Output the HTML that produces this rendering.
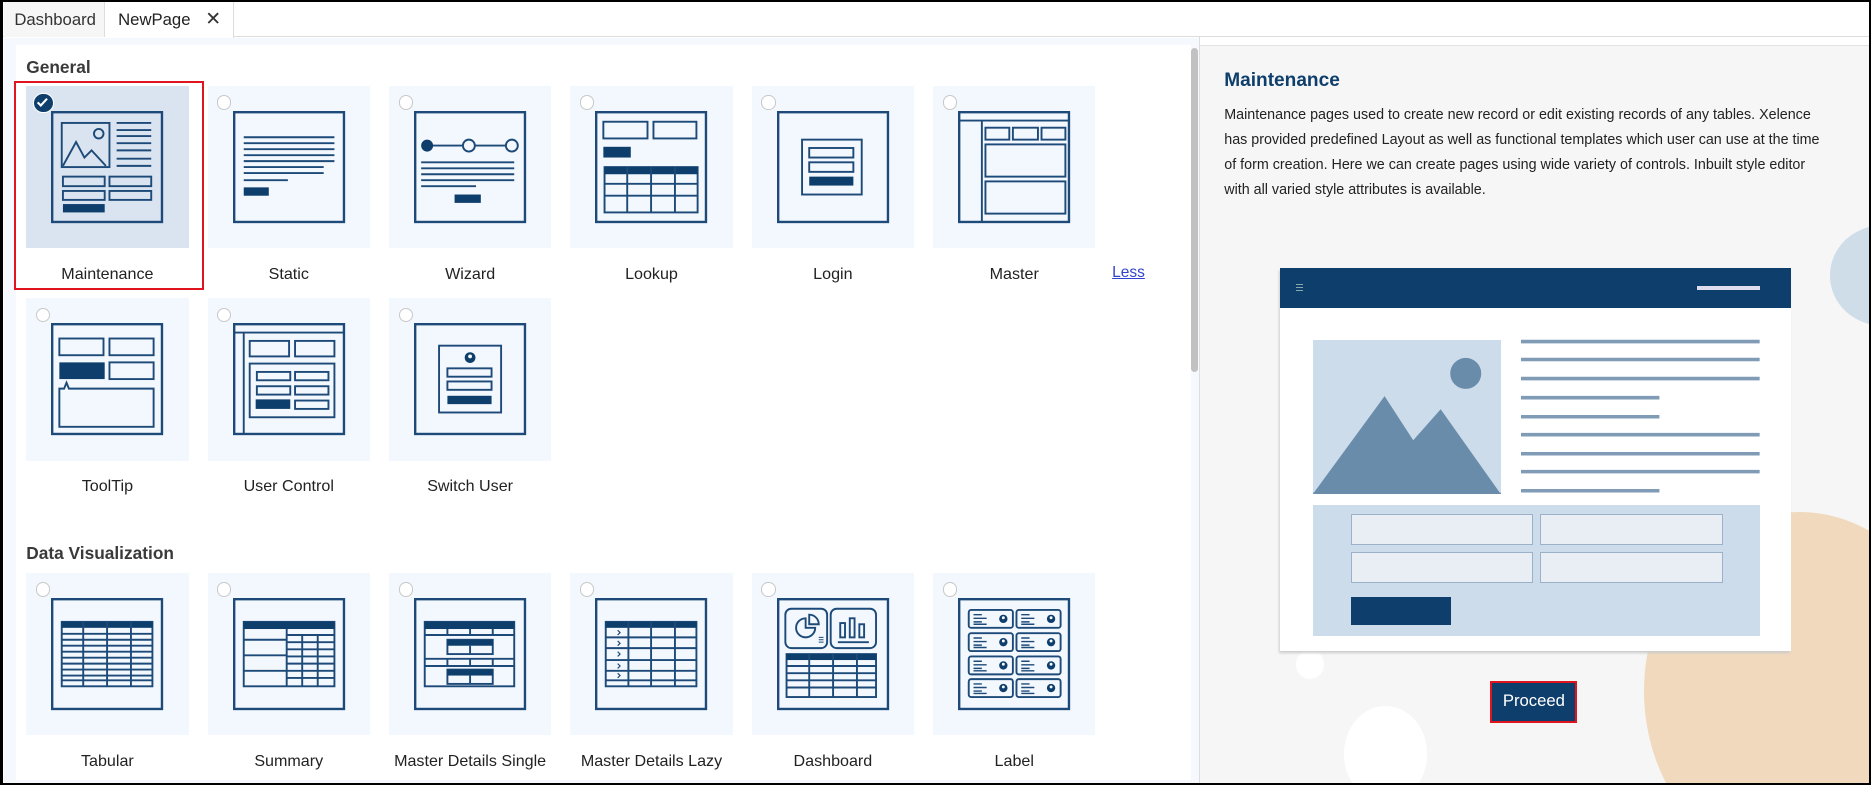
<!DOCTYPE html>
<html><head><meta charset="utf-8">
<style>
html{zoom:1.19324;overflow:hidden}
*{box-sizing:border-box;margin:0;padding:0}
body{width:1568px;height:658px;position:relative;overflow:hidden;background:#fff;font-family:"Liberation Sans",Arial,sans-serif;}
.abs{position:absolute}
.card{position:absolute;width:136px;height:136px;background:#f3f8fe}
.card .r{position:absolute;left:8px;top:8px;width:12px;height:12px;border-radius:50%;border:1px solid #c8c8c8;background:#fff}
.card svg{position:absolute;left:21px;top:21px;width:96px;height:96px;overflow:visible}
.lbl{position:absolute;width:136px;text-align:center;font-size:13.5px;color:#222;top:150px}
svg .f{fill:none;stroke:#1d4a78;stroke-width:2}
svg .s{fill:none;stroke:#1d4a78;stroke-width:1.6}
svg .d{fill:#0e3e6b}
svg .l{stroke:#1d4a78;stroke-width:1.6}
h3{font-size:14.5px;font-weight:bold;color:#3a3a3a;position:absolute}
</style></head><body>
<div class="abs" style="left:0;top:0;width:1568px;height:658px;border:2px solid #000;border-left-width:3px;z-index:50;pointer-events:none"></div>
<div class="abs" style="left:0;top:0;width:1568px;height:31px;background:#fff;border-bottom:1px solid #ddd"></div>
<div class="abs" style="left:3px;top:2px;width:85px;height:29px;background:#f6f6f6;border-right:1px solid #ddd;font-size:14px;color:#333;padding:6px 0 0 9px">Dashboard</div>
<div class="abs" style="left:88px;top:2px;width:108px;height:30px;background:#fff;border-right:1px solid #ddd;font-size:14px;color:#222;padding:6px 0 0 11px">NewPage<span style="position:absolute;left:84px;top:4px;font-size:16px;color:#333">✕</span></div>
<div class="abs" style="left:3px;top:32px;width:1002px;height:624px;background:#f5f8fd"></div>
<div class="abs" style="left:13px;top:38px;width:985px;height:616px;background:#fff"></div>
<div class="abs" style="left:998px;top:40px;width:6px;height:272px;background:#c1c1c1;border-radius:3px"></div>
<div class="abs" style="left:1005px;top:31px;width:1px;height:625px;background:#ddd"></div>
<h3 style="left:22px;top:48px">General</h3>
<h3 style="left:22px;top:455px">Data Visualization</h3>

<div class="abs" style="left:12px;top:68px;width:159px;height:175px;border:2px solid #e0141e"></div>
<div class="card" style="left:22px;top:72px;background:#dae4f1">
<div style="position:absolute;left:6px;top:6px;width:17px;height:17px;border-radius:50%;background:#0e3e6b;border:1.5px solid #fff"><svg viewBox="0 0 16 16" style="left:0;top:0;width:14px;height:14px"><path d="M3.5 8l3 3 6-6.5" stroke="#fff" stroke-width="2" fill="none"/></svg></div>
<svg viewBox="0 0 96 96"><rect class="f" x="1" y="1" width="92" height="92"/>
<rect class="s" x="9" y="10" width="40" height="37"/><path class="s" d="M10 46 L21 26 L28 39 L34 33 L46 46"/><circle class="s" cx="40" cy="19" r="4"/>
<path class="l" d="M55 10h29M55 16h29M55 21h29M55 27h29M55 33h29M55 40h29M55 46h29"/>
<rect class="s" x="10" y="55" width="35" height="8"/><rect class="s" x="49" y="55" width="35" height="8"/><rect class="s" x="10" y="67" width="35" height="7.5"/><rect class="s" x="49" y="67" width="35" height="7.5"/><rect class="d" x="10" y="78" width="35" height="7"/></svg>
<div class="lbl">Maintenance</div></div>

<div class="card" style="left:174px;top:72px"><div class="r"></div>
<svg viewBox="0 0 96 96"><rect class="f" x="1" y="1" width="92" height="92"/>
<path class="l" d="M9 22h76M9 27h76M9 32h76M9 37h76M9 42h76M9 47h67M9 52h67M9 58h37"/><rect class="d" x="9" y="64" width="21" height="7"/></svg>
<div class="lbl">Static</div></div>

<div class="card" style="left:326px;top:72px"><div class="r"></div>
<svg viewBox="0 0 96 96"><rect class="f" x="1" y="1" width="92" height="92"/>
<path class="l" d="M11 29h70"/><circle cx="11" cy="29" r="5" class="d"/><circle cx="46" cy="29" r="5" fill="#f3f8fe" stroke="#1d4a78" stroke-width="1.6"/><circle cx="82" cy="29" r="5" fill="#f3f8fe" stroke="#1d4a78" stroke-width="1.6"/>
<path class="l" d="M6 43h78M6 48h78M6 53h78M6 58h78M6 63h46"/><rect class="d" x="34" y="70" width="22" height="7"/></svg>
<div class="lbl">Wizard</div></div>

<div class="card" style="left:478px;top:72px"><div class="r"></div>
<svg viewBox="0 0 96 96"><rect class="f" x="1" y="1" width="92" height="92"/>
<rect class="s" x="7" y="9" width="37" height="14"/><rect class="s" x="49" y="9" width="36" height="14"/><rect class="d" x="7" y="30" width="23" height="9"/>
<rect class="s" x="8" y="47" width="78" height="38"/><rect class="d" x="8" y="47" width="78" height="6"/><path class="l" d="M8 61h78M8 71h78M27 47v38M47 47v38M67 47v38"/></svg>
<div class="lbl">Lookup</div></div>

<div class="card" style="left:630px;top:72px"><div class="r"></div>
<svg viewBox="0 0 96 96"><rect class="f" x="1" y="1" width="92" height="92"/>
<rect class="s" x="21" y="24" width="50" height="46"/><rect class="s" x="27" y="31" width="37" height="8"/><rect class="s" x="27" y="43" width="37" height="8"/><rect class="d" x="27" y="55" width="37" height="7.5"/></svg>
<div class="lbl">Login</div></div>

<div class="card" style="left:782px;top:72px"><div class="r"></div>
<svg viewBox="0 0 96 96"><rect class="f" x="1" y="1" width="92" height="92"/>
<path class="l" d="M1 8h92M20 8v85"/><rect class="s" x="23" y="14" width="20" height="10"/><rect class="s" x="46" y="14" width="21" height="10"/><rect class="s" x="70" y="14" width="20" height="10"/><rect class="s" x="23" y="28" width="67" height="27"/><rect class="s" x="23" y="59" width="67" height="27"/></svg>
<div class="lbl">Master</div></div>
<div class="abs" style="left:932px;top:221px;font-size:13px;color:#3344cc;text-decoration:underline">Less</div>

<div class="card" style="left:22px;top:250px"><div class="r"></div>
<svg viewBox="0 0 96 96"><rect class="f" x="1" y="1" width="92" height="92"/>
<rect class="s" x="7" y="13" width="37" height="14"/><rect class="s" x="49" y="13" width="37" height="14"/><rect class="d" x="7" y="33" width="38" height="14"/><rect class="s" x="49" y="33" width="37" height="14"/>
<path class="s" d="M7 55h4l2-5 2 5h71v32H7z"/></svg>
<div class="lbl">ToolTip</div></div>

<div class="card" style="left:174px;top:250px"><div class="r"></div>
<svg viewBox="0 0 96 96"><rect class="f" x="1" y="1" width="92" height="92"/>
<path class="l" d="M1 8h92M9 8v85"/><rect class="s" x="14" y="15" width="33" height="13"/><rect class="s" x="52" y="15" width="33" height="13"/><rect class="s" x="14" y="34" width="71" height="45"/>
<rect class="s" x="20" y="41" width="28" height="7"/><rect class="s" x="52" y="41" width="28" height="7"/><rect class="s" x="20" y="53" width="28" height="7"/><rect class="s" x="52" y="53" width="28" height="7"/><rect class="d" x="19" y="64" width="29" height="8"/><rect class="s" x="52" y="65" width="28" height="7"/></svg>
<div class="lbl">User Control</div></div>

<div class="card" style="left:326px;top:250px"><div class="r"></div>
<svg viewBox="0 0 96 96"><rect class="f" x="1" y="1" width="92" height="92"/>
<rect class="s" x="21" y="19" width="52" height="56"/><circle class="d" cx="47" cy="29" r="4.5"/><circle cx="47" cy="28" r="1.6" fill="#fff"/><rect class="s" x="28" y="38" width="37" height="7"/><rect class="s" x="28" y="49" width="37" height="7"/><rect class="d" x="28" y="61" width="37" height="7"/></svg>
<div class="lbl">Switch User</div></div>

<div class="card" style="left:22px;top:480px"><div class="r"></div>
<svg viewBox="0 0 96 96"><rect class="f" x="1" y="1" width="92" height="92"/>
<rect class="s" x="9" y="20" width="76" height="54"/><rect class="d" x="9" y="20" width="76" height="5"/>
<path class="l" d="M9 30h76M9 35h76M9 40h76M9 45h76M9 50h76M9 55h76M9 60h76M9 65h76M9 69h76M27 20v54M47 20v54M67 20v54"/></svg>
<div class="lbl">Tabular</div></div>

<div class="card" style="left:174px;top:480px"><div class="r"></div>
<svg viewBox="0 0 96 96"><rect class="f" x="1" y="1" width="92" height="92"/>
<rect class="s" x="9" y="20" width="76" height="54"/><rect class="d" x="9" y="20" width="76" height="6"/>
<path class="l" d="M45 26v48M9 35h36M9 48h36M9 61h36M45 31h40M45 37h40M45 43h40M45 49h40M45 55h40M45 61h40M45 67h40M58 31v43M71 31v43"/></svg>
<div class="lbl">Summary</div></div>

<div class="card" style="left:326px;top:480px"><div class="r"></div>
<svg viewBox="0 0 96 96"><rect class="f" x="1" y="1" width="92" height="92"/>
<rect class="s" x="9" y="20" width="75" height="54"/><rect class="d" x="9" y="20" width="75" height="6"/>
<path class="l" d="M9 31h75M28 26v5M47 26v5M66 26v5"/><rect class="s" x="28" y="35" width="38" height="12"/><rect class="d" x="28" y="35" width="38" height="5"/><path class="l" d="M47 40v7"/>
<path class="l" d="M9 51h75M9 57h75M28 51v6M47 51v6M66 51v6"/><rect class="s" x="28" y="60" width="38" height="12"/><rect class="d" x="28" y="60" width="38" height="5"/><path class="l" d="M47 65v7"/></svg>
<div class="lbl">Master Details Single</div></div>

<div class="card" style="left:478px;top:480px"><div class="r"></div>
<svg viewBox="0 0 96 96"><rect class="f" x="1" y="1" width="92" height="92"/>
<rect class="s" x="9" y="20" width="76" height="54"/><rect class="d" x="9" y="20" width="76" height="5"/>
<path class="l" d="M9 33h76M9 42h76M9 52h76M9 61h76M9 69h76M28 20v54M47 20v54M67 20v54"/>
<path stroke="#1d4a78" stroke-width="1" fill="none" d="M19 27l2 2-2 2M19 36l2 2-2 2M19 45l2 2-2 2M19 55l2 2-2 2M19 63l2 2-2 2"/></svg>
<div class="lbl">Master Details Lazy</div></div>

<div class="card" style="left:630px;top:480px"><div class="r"></div>
<svg viewBox="0 0 96 96"><rect class="f" x="1" y="1" width="92" height="92"/>
<rect class="s" x="7" y="9" width="35" height="33" rx="5"/><rect class="s" x="45" y="9" width="38" height="33" rx="5"/>
<path class="s" d="M24 17a8 8 0 1 0 8 8h-8z"/><path class="s" d="M27 14v8h8a8 8 0 0 0-8-8z"/><path stroke="#1d4a78" stroke-width="0.8" d="M35 33h4M35 35h4M35 37h4"/>
<rect class="s" x="53" y="21" width="4" height="12"/><rect class="s" x="61" y="17" width="4" height="16"/><rect class="s" x="69" y="22" width="4" height="11"/><path class="l" d="M51 37h26"/>
<rect class="s" x="8" y="47" width="75" height="36"/><rect class="d" x="8" y="47" width="75" height="5"/><path class="l" d="M8 57h75M8 63h75M8 69h75M8 75h75M27 47v36M47 47v36M67 47v36"/></svg>
<div class="lbl">Dashboard</div></div>

<div class="card" style="left:782px;top:480px"><div class="r"></div>
<svg viewBox="0 0 96 96"><rect class="f" x="1" y="1" width="92" height="92"/>
<g id="lc"><rect class="s" x="9" y="10" width="37" height="15" rx="2"/><path stroke="#1d4a78" stroke-width="1.2" d="M13 14h7M13 17h11M13 20h7M13 22h11"/><circle cx="38" cy="17.5" r="3.5" class="d"/><circle cx="38" cy="16.5" r="1.2" fill="#fff"/></g>
<use href="#lc" x="40"/><use href="#lc" y="19.5"/><use href="#lc" x="40" y="19.5"/><use href="#lc" y="39"/><use href="#lc" x="40" y="39"/><use href="#lc" y="58"/><use href="#lc" x="40" y="58"/></svg>
<div class="lbl">Label</div></div>

<div class="abs" style="left:1006px;top:38px;width:560px;height:618px;background:#f6f6f6;overflow:hidden;border-top:1px solid #e2e2e2">
 <div class="abs" style="left:528px;top:150px;width:90px;height:84px;border-radius:50%;background:#cfdde9"></div>
 <div class="abs" style="left:372px;top:390px;width:260px;height:300px;border-radius:50%;background:#f0d9bd"></div>
 <div class="abs" style="left:80px;top:506px;width:24px;height:24px;border-radius:50%;background:#fff"></div>
 <div class="abs" style="left:120px;top:553px;width:70px;height:80px;border-radius:50%;background:#fff"></div>
</div>
<div class="abs" style="left:1026px;top:59px;font-size:16px;font-weight:bold;color:#0e3e6b">Maintenance</div>
<div class="abs" style="left:1026px;top:86px;width:505px;font-size:12px;line-height:21px;color:#222">Maintenance pages used to create new record or edit existing records of any tables. Xelence has provided predefined Layout as well as functional templates which user can use at the time of form creation. Here we can create pages using wide variety of controls. Inbuilt style editor with all varied style attributes is available.</div>

<div class="abs" style="left:1073px;top:225px;width:428px;height:321px;background:#fff;box-shadow:-1px 2px 2px #ccc">
 <div class="abs" style="left:0;top:0;width:428px;height:33px;background:#0e3e6b"></div>
 <div class="abs" style="left:13px;top:13px;width:6px;height:6px;border-top:1px solid #8aa;border-bottom:1px solid #8aa"></div>
 <div class="abs" style="left:13px;top:15.5px;width:6px;height:1px;background:#8aa"></div>
 <div class="abs" style="left:349px;top:15px;width:53px;height:3px;background:#dde"></div>
 <svg class="abs" style="left:27px;top:60px" width="158" height="129"><rect width="158" height="129" fill="#cddcea"/><polygon points="0,129 60,47 84,84 107,58 158,130" fill="#6a8cab"/><rect x="0" y="128" width="158" height="1" fill="#6a8cab"/><circle cx="128" cy="28" r="13" fill="#6a8cab"/></svg>
 <svg class="abs" style="left:202px;top:58px" width="202" height="132"><g stroke="#7f9bb6" stroke-width="3"><path d="M0 3h200M0 18h200M0 34h200M0 50h116M0 66h116M0 81h200M0 97h200M0 112h200M0 128h116"/></g></svg>
 <div class="abs" style="left:27px;top:198px;width:375px;height:110px;background:#cddcea">
  <div class="abs" style="left:32px;top:8px;width:153px;height:26px;background:#e9eef5;border:1px solid #9ab1c8"></div>
  <div class="abs" style="left:191px;top:8px;width:153px;height:26px;background:#e9eef5;border:1px solid #9ab1c8"></div>
  <div class="abs" style="left:32px;top:40px;width:153px;height:26px;background:#e9eef5;border:1px solid #9ab1c8"></div>
  <div class="abs" style="left:191px;top:40px;width:153px;height:26px;background:#e9eef5;border:1px solid #9ab1c8"></div>
  <div class="abs" style="left:32px;top:77px;width:84px;height:24px;background:#0e3e6b"></div>
 </div>
</div>
<div class="abs" style="left:1249px;top:571px;width:73px;height:35px;border:2px solid #e0141e;background:#0e3e6b;color:#fff;font-size:14px;text-align:center;line-height:31px">Proceed</div>
</body></html>
